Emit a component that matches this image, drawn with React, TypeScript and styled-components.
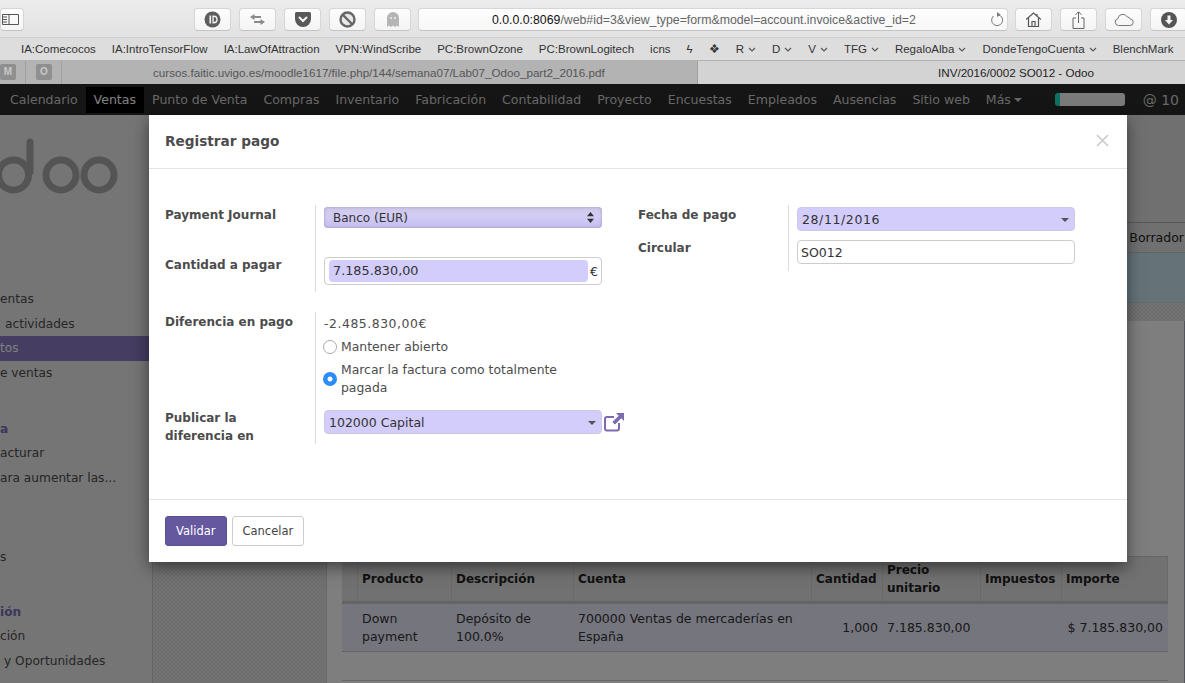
import styled, { createGlobalStyle } from 'styled-components';

const GlobalStyle = createGlobalStyle`
  html, body {
    margin: 0;
    padding: 0;
    background: #808080;
  }
  * {
    box-sizing: border-box;
  }
`;

const Window = styled.div`
  position: relative;
  width: 1185px;
  height: 683px;
  overflow: hidden;
  display: flex;
  flex-direction: column;
  font-family: 'Liberation Sans', Arial, sans-serif;
`;

/* browser chrome */
const Toolbar = styled.div`
  height: 38px;
  flex: none;
  display: flex;
  align-items: flex-start;
  padding-top: 8px;
  gap: 8px;
  background: linear-gradient(#ececec, #e2e2e2);
  border-bottom: 1px solid #cfcfcf;
`;

const ToolButton = styled.div<{ $clip?: boolean }>`
  width: ${(p) => (p.$clip ? '24px' : '37px')};
  height: 23px;
  flex: none;
  display: flex;
  align-items: center;
  justify-content: ${(p) => (p.$clip ? 'flex-end' : 'center')};
  padding-right: ${(p) => (p.$clip ? '4px' : '0')};
  margin-right: ${(p) => (p.$clip ? '162px' : '0')};
  background: linear-gradient(#fdfdfd, #f4f4f4);
  border: 1px solid #d6d6d6;
  border-bottom-color: #c4c4c4;
  border-radius: 4px;
`;

const UrlBar = styled.div`
  width: 590px;
  height: 23px;
  flex: none;
  margin: 0 -1px;
  display: flex;
  align-items: center;
  padding: 0 3px 0 73px;
  background: linear-gradient(#fefefe, #f7f7f7);
  border: 1px solid #d6d6d6;
  border-bottom-color: #c4c4c4;
  border-radius: 4px;
  font-size: 12.3px;
  color: #666;
  white-space: nowrap;
`;

const UrlHost = styled.span`
  color: #111;
`;

const UrlText = styled.div`
  flex: 1;
`;

const BookmarkBar = styled.div`
  height: 23px;
  flex: none;
  display: flex;
  align-items: center;
  padding-left: 21px;
  gap: 16px;
  background: #dddddd;
  border-bottom: 1px solid #b2b2b2;
  font-size: 11.5px;
  color: #333;
  white-space: nowrap;
`;

const Bookmark = styled.span`
  display: inline-flex;
  align-items: center;
  gap: 4px;
`;

const TabBar = styled.div`
  height: 23px;
  flex: none;
  display: flex;
  background: #b3b3b3;
  font-size: 11.65px;
  white-space: nowrap;
`;

const PinnedTab = styled.div<{ $w: number; $pad: number }>`
  width: ${(p) => p.$w}px;
  flex: none;
  padding: 3px 0 0 ${(p) => p.$pad}px;
  border-right: 1px solid #9f9f9f;
`;

const PinnedIcon = styled.div`
  width: 16px;
  height: 16px;
  border-radius: 2px;
  background: #8f8f8f;
  color: #c9c9c9;
  font-size: 10px;
  font-weight: bold;
  line-height: 16px;
  text-align: center;
`;

const PageTab = styled.div`
  width: 636px;
  flex: none;
  padding: 5px 0 0 91px;
  color: #555;
  border-right: 1px solid #9f9f9f;
`;

const ActiveTab = styled.div`
  flex: 1;
  padding: 5px 0 0 240px;
  background: #d3d3d3;
  color: #222;
`;

/* odoo page under the dialog */
const Page = styled.div`
  flex: 1;
  min-height: 0;
  display: flex;
  flex-direction: column;
  position: relative;
  font-family: 'DejaVu Sans', Verdana, sans-serif;
`;

const NavBar = styled.div`
  height: 31px;
  flex: none;
  display: flex;
  align-items: center;
  padding-left: 2px;
  background: #2a2a2a;
  color: #cfcfcf;
  font-size: 12.55px;
`;

const NavItem = styled.div<{ $active?: boolean }>`
  height: 26px;
  line-height: 26px;
  padding: 0 8px;
  white-space: nowrap;
  background: ${(p) => (p.$active ? '#000' : 'transparent')};
  color: ${(p) => (p.$active ? '#fff' : 'inherit')};
`;

const Caret = styled.span`
  display: inline-block;
  margin-left: 3px;
  vertical-align: 2px;
  border: 4px solid transparent;
  border-top-color: currentColor;
  border-bottom-width: 0;
`;

const NavRight = styled.div`
  margin-left: auto;
  display: flex;
  align-items: center;
  gap: 18px;
  padding-right: 6px;
  font-size: 14px;
`;

const UserPill = styled.div`
  width: 70px;
  height: 13px;
  border-radius: 3px;
  background: #f6f6f6;
  border-left: 5px solid #1ce0c0;
`;

const Main = styled.div`
  flex: 1;
  min-height: 0;
  display: flex;
`;

const Sidebar = styled.div`
  width: 153px;
  flex: none;
  padding-top: 23px;
  overflow: hidden;
  background: #ebebeb;
  border-right: 1px solid #c8c8c8;
  font-size: 12.2px;
  color: #4c4c4c;
  white-space: nowrap;
`;

const Logo = styled.svg`
  display: block;
  width: 120px;
  height: 56px;
  margin-bottom: 93px;
`;

const MenuSection = styled.div<{ $top?: number }>`
  margin-top: ${(p) => p.$top ?? 31}px;
`;

const MenuItem = styled.div<{ $active?: boolean; $title?: boolean; $indent?: number }>`
  height: 24.7px;
  line-height: 24px;
  padding-left: ${(p) => p.$indent ?? 0}px;
  background: ${(p) => (p.$active ? '#8a7ac4' : 'transparent')};
  color: ${(p) => (p.$active ? '#fff' : p.$title ? '#7c6bb5' : 'inherit')};
  font-weight: ${(p) => (p.$title ? 'bold' : 'normal')};
`;

const checker = `
  background-color: #e6e6e6;
  background-image: repeating-conic-gradient(#dcdcdc 0 25%, transparent 0 50%);
  background-size: 4px 4px;
`;

const Content = styled.div`
  flex: 1;
  min-width: 0;
  display: flex;
  flex-direction: column;
  background: #e0e0e0;
`;

const ControlPanel = styled.div`
  height: 107px;
  flex: none;
`;

const StatusBar = styled.div`
  height: 31px;
  flex: none;
  display: flex;
  justify-content: flex-end;
  align-items: center;
  border-top: 1px solid #b0b0b0;
  border-bottom: 1px solid #c4c4c4;
  font-size: 12.5px;
  color: #222;
  padding-right: 1px;
`;

const InfoBand = styled.div`
  height: 50px;
  flex: none;
  background: #cae7f3;
  border-bottom: 1px solid #bde0e8;
`;

const Sheetless = styled.div`
  height: 18px;
  flex: none;
  ${checker}
`;

const Lower = styled.div`
  flex: 1;
  min-height: 0;
  display: flex;
  ${checker}
`;

const Sheet = styled.div`
  margin-left: 173px;
  flex: 1;
  padding: 235px 16px 0 15px;
  background: #fcfcfc;
  border-left: 1px solid #d0d0d0;
  border-right: 1px solid #a8a8b8;
`;

const TableRow = styled.div<{ $head?: boolean }>`
  display: grid;
  grid-template-columns: 16px 94px 122px 238px 71px 98px 81px 106px;
  height: 48px;
  font-size: ${(p) => (p.$head ? '12px' : '12.5px')};
  line-height: 18px;
  color: ${(p) => (p.$head ? '#222' : '#333')};
  font-weight: ${(p) => (p.$head ? 'bold' : 'normal')};
  background: ${(p) => (p.$head ? '#e2e2e2' : '#eaeafa')};
  border-top: ${(p) => (p.$head ? '1px solid #cccccc' : '0')};
  border-bottom: ${(p) => (p.$head ? '3px solid #c8c8c8' : '1px solid #c8c8c8')};
`;

const TableCell = styled.div<{ $head?: boolean; $right?: boolean }>`
  display: flex;
  align-items: center;
  justify-content: ${(p) => (p.$right ? 'flex-end' : 'flex-start')};
  padding: 0 ${(p) => (p.$right ? '5px' : '4px')};
  border-right: ${(p) => (p.$head ? '1px solid #d2d2d2' : '0')};
`;

const TableFoot = styled.div`
  margin-top: 28px;
  border-top: 1px solid #cfcfcf;
`;

const Backdrop = styled.div`
  position: absolute;
  inset: 0;
  background: rgba(0, 0, 0, 0.5);
`;

/* dialog */
const Modal = styled.div`
  position: absolute;
  left: 149px;
  top: 31px;
  width: 978px;
  height: 447px;
  display: flex;
  flex-direction: column;
  background: #fff;
  box-shadow: 0 5px 15px rgba(0, 0, 0, 0.5);
  color: #4c4c4c;
  font-size: 12.4px;
`;

const ModalHeader = styled.div`
  height: 54px;
  flex: none;
  display: flex;
  align-items: center;
  justify-content: space-between;
  padding: 0 18px 2px 16px;
  border-bottom: 1px solid #e5e5e5;
`;

const ModalTitle = styled.div`
  font-size: 13.65px;
  font-weight: bold;
`;

const ModalBody = styled.div`
  flex: 1;
  display: grid;
  grid-template-columns: 473px 1fr;
  align-content: start;
  padding: 36px 16px 0;
`;

const FormColumn = styled.div`
  display: flex;
  flex-direction: column;
  gap: 20px;
`;

const FieldGroup = styled.div`
  display: grid;
  grid-template-columns: 150px auto;
  justify-content: start;
`;

const FieldLabel = styled.div`
  font-size: 12px;
  font-weight: bold;
  line-height: 18px;
  width: 135px;
  padding-top: 1px;
`;

const FieldValue = styled.div<{ $h: number; $top?: number }>`
  height: ${(p) => p.$h}px;
  padding: ${(p) => p.$top ?? 2}px 0 0 8px;
  border-left: 1px solid #ddd;
  display: flex;
  flex-direction: column;
  align-items: flex-start;
`;

const fieldBase = `
  width: 278px;
  display: flex;
  align-items: center;
  justify-content: space-between;
  color: #333;
  font-size: 12.5px;
  border-radius: 4px;
`;

const NativeSelect = styled.div`
  ${fieldBase}
  height: 21px;
  padding: 0 8px 0 9px;
  font-size: 12px;
  background: linear-gradient(#cdc7e6, #d3cdf6 40%, #c3bdee);
  box-shadow: inset 0 0 3px #9a94c0;
`;

const DropField = styled.div<{ $wide?: boolean }>`
  ${fieldBase}
  height: 24px;
  padding: 0 5px 0 4px;
  letter-spacing: ${(p) => (p.$wide ? '0.6px' : '0')};
  background: #d3cdfc;
  border: 1px solid #ccc9e4;
`;

const TextField = styled.div`
  ${fieldBase}
  height: 24px;
  padding: 0 3px;
  background: #fff;
  border: 1px solid #ccc;
`;

const MoneyField = styled.div`
  ${fieldBase}
  height: 28px;
  padding: 2px 3px 2px 4px;
  gap: 2px;
  background: #fff;
  border: 1px solid #ccc;
`;

const MoneyInput = styled.div`
  flex: 1;
  height: 22px;
  line-height: 22px;
  padding-left: 4px;
  font-size: 12.8px;
  background: #d3cdfc;
  border-radius: 4px;
`;

const DropCaret = styled.span`
  border: 4px solid transparent;
  border-top-color: #555;
  border-bottom-width: 0;
  transform: translateY(1px);
`;

const AmountLine = styled.div`
  line-height: 18px;
  letter-spacing: 0.55px;
`;

const RadioRow = styled.label`
  display: flex;
  align-items: center;
  gap: 4px;
  margin-top: 4.5px;
  margin-left: -1px;
  width: 255px;
  line-height: 18.5px;
`;

const Radio = styled.input`
  appearance: none;
  width: 14px;
  height: 14px;
  flex: none;
  margin: 0;
  background: #fff;
  border: 1px solid #aaa;
  border-radius: 50%;

  &:checked {
    border: 0;
    background: radial-gradient(circle, #fff 0 2.2px, #2c8cfb 2.8px);
  }
`;

const SelectLine = styled.div`
  display: flex;
  align-items: center;
  gap: 2px;
`;

const ModalFooter = styled.div`
  height: 63px;
  flex: none;
  display: flex;
  align-items: flex-start;
  gap: 5px;
  padding: 16px 16px 0;
  border-top: 1px solid #e5e5e5;
`;

const DialogButton = styled.div<{ $primary?: boolean }>`
  height: 30px;
  padding: 0 10px;
  line-height: 29px;
  font-size: 11.5px;
  border-radius: 3px;
  border: 1px solid ${(p) => (p.$primary ? '#5d5095' : '#ccc')};
  background: ${(p) => (p.$primary ? '#65589f' : '#fff')};
  color: ${(p) => (p.$primary ? '#fff' : '#444')};
`;

const Chevron = () => (
  <svg width="8" height="5" viewBox="0 0 8 5">
    <path d="M1 1l3 3 3-3" fill="none" stroke="#555" strokeWidth="1.1" />
  </svg>
);

const SidebarToggleIcon = () => (
  <svg width="17" height="11" viewBox="0 0 17 11">
    <path d="M.5.5h16v10H.5zM7 .5v10M1 3h4M1 5.5h4M1 8h4" fill="none" stroke="#555" />
  </svg>
);

const toolIcons = {
  id: (
    <svg width="17" height="17" viewBox="0 0 17 17">
      <circle cx="8.5" cy="8.5" r="8" fill="#5e5e5e" />
      <path d="M5.5 4.5h1.6v8H5.5zM8.4 4.5h1.3a4 4 0 010 8H8.4zm1.3 1.6v4.8h.3a2.4 2.4 0 000-4.8z" fill="#f4f4f4" />
    </svg>
  ),
  swap: (
    <svg width="15" height="11" viewBox="0 0 15 11">
      <path d="M4.5 0v2H11v2H4.5v2L0 3zM10.5 5v2H4v2h6.500v2L15 8z" fill="#8a8a8a" />
    </svg>
  ),
  pocket: (
    <svg width="16" height="15" viewBox="0 0 16 15">
      <path d="M1.500 0h13A1.500 1.500 0 0116 1.500V7A8 8 0 010 7V1.500A1.500 1.500 0 011.500 0z" fill="#585858" />
      <path d="M4.500 5.500L8 9l3.500-3.500" fill="none" stroke="#f4f4f4" strokeWidth="2" strokeLinecap="round" />
    </svg>
  ),
  block: (
    <svg width="17" height="17" viewBox="0 0 17 17">
      <circle cx="8.500" cy="8.500" r="7" fill="#e8e8e8" stroke="#666" strokeWidth="2.400" />
      <path d="M4 4l9 9" stroke="#666" strokeWidth="2.400" />
    </svg>
  ),
  ghost: (
    <svg width="12" height="15" viewBox="0 0 12 15">
      <path d="M0 15V6a6 6 0 0112 0v9l-2-1.500L8 15l-2-1.500L4 15l-2-1.500z" fill="#b5b5b5" />
      <circle cx="4" cy="6" r="1" fill="#efefef" />
      <circle cx="8" cy="6" r="1" fill="#efefef" />
    </svg>
  ),
  reload: (
    <svg width="14" height="15" viewBox="0 0 14 15">
      <path d="M8.500 2.800a5.500 5.500 0 11-5 1.200" fill="none" stroke="#777" strokeWidth="1" />
      <path d="M7 0l3.500 2.800L7 5z" fill="#777" />
    </svg>
  ),
  home: (
    <svg width="15" height="15" viewBox="0 0 15 15">
      <path d="M0 7.500L7.500 1 15 7.500M2.500 6v8.500h10V6M6 14.500V9.500h3v5M11 2v2.500" fill="none" stroke="#555" strokeWidth="1.200" />
    </svg>
  ),
  share: (
    <svg width="13" height="18" viewBox="0 0 13 18">
      <path d="M4 7H1v10.500h11V7H9M6.500 12V1M3.500 3.800l3-3 3 3" fill="none" stroke="#666" />
    </svg>
  ),
  cloud: (
    <svg width="20" height="13" viewBox="0 0 20 13">
      <path d="M4.500 12.500a3.500 3.500 0 01-.6-6.900A5 5 0 0113.300 4a3 3 0 013 2.100 3.200 3.200 0 01-.6 6.400z" fill="none" stroke="#777" />
    </svg>
  ),
  download: (
    <svg width="16" height="16" viewBox="0 0 16 16">
      <circle cx="8" cy="8" r="8" fill="#555" />
      <path d="M6.500 3.500h3V8H12l-4 4.500L4 8h2.500z" fill="#f4f4f4" />
    </svg>
  ),
};

const columns = ['', 'Producto', 'Descripción', 'Cuenta', 'Cantidad', 'Precio unitario', 'Impuestos', 'Importe'];

const navItems = ['Calendario', 'Ventas', 'Punto de Venta', 'Compras', 'Inventario', 'Fabricación', 'Contabilidad', 'Proyecto', 'Encuestas', 'Empleados', 'Ausencias', 'Sitio web'];

const bookmarks = ['IA:Comecocos', 'IA:IntroTensorFlow', 'IA:LawOfAttraction', 'VPN:WindScribe', 'PC:BrownOzone', 'PC:BrownLogitech', 'icns'];

export default function App() {
  return (
    <Window>
      <GlobalStyle />
      <Toolbar>
        <ToolButton $clip>
          <SidebarToggleIcon />
        </ToolButton>
        <ToolButton>{toolIcons.id}</ToolButton>
        <ToolButton>{toolIcons.swap}</ToolButton>
        <ToolButton>{toolIcons.pocket}</ToolButton>
        <ToolButton>{toolIcons.block}</ToolButton>
        <ToolButton>{toolIcons.ghost}</ToolButton>
        <UrlBar>
          <UrlText>
            <UrlHost>0.0.0.0:8069</UrlHost>/web#id=3&amp;view_type=form&amp;model=account.invoice&amp;active_id=2
          </UrlText>
          {toolIcons.reload}
        </UrlBar>
        <ToolButton>{toolIcons.home}</ToolButton>
        <ToolButton>{toolIcons.share}</ToolButton>
        <ToolButton>{toolIcons.cloud}</ToolButton>
        <ToolButton>{toolIcons.download}</ToolButton>
      </Toolbar>

      <BookmarkBar>
        {bookmarks.map((b) => (
          <Bookmark key={b}>{b}</Bookmark>
        ))}
        <Bookmark>ϟ</Bookmark>
        <Bookmark>❖</Bookmark>
        {['R', 'D', 'V', 'TFG', 'RegaloAlba', 'DondeTengoCuenta'].map((b) => (
          <Bookmark key={b}>
            {b} <Chevron />
          </Bookmark>
        ))}
        <Bookmark>BlenchMark</Bookmark>
      </BookmarkBar>

      <TabBar>
        <PinnedTab $w={26} $pad={0}>
          <PinnedIcon>M</PinnedIcon>
        </PinnedTab>
        <PinnedTab $w={36} $pad={10}>
          <PinnedIcon>O</PinnedIcon>
        </PinnedTab>
        <PageTab>cursos.faitic.uvigo.es/moodle1617/file.php/144/semana07/Lab07_Odoo_part2_2016.pdf</PageTab>
        <ActiveTab>INV/2016/0002 SO012 - Odoo</ActiveTab>
      </TabBar>

      <Page>
        <NavBar>
          {navItems.map((n) => (
            <NavItem key={n} $active={n === 'Ventas'}>
              {n}
            </NavItem>
          ))}
          <NavItem>
            Más
            <Caret />
          </NavItem>
          <NavRight>
            <UserPill />
            <span>@ 10</span>
          </NavRight>
        </NavBar>

        <Main>
          <Sidebar>
            <Logo viewBox="0 0 120 56">
              <g fill="none" stroke="#a8a8a8" strokeWidth="7">
                <circle cx="13.500" cy="37" r="15" />
                <path d="M30 4v30" strokeLinecap="round" />
                <circle cx="61" cy="37" r="15" />
                <circle cx="99" cy="37" r="15" />
              </g>
            </Logo>
            <MenuSection $top={0}>
              <MenuItem>entas</MenuItem>
              <MenuItem $indent={5}>actividades</MenuItem>
              <MenuItem $active>tos</MenuItem>
              <MenuItem>e ventas</MenuItem>
            </MenuSection>
            <MenuSection>
              <MenuItem $title>a</MenuItem>
              <MenuItem>acturar</MenuItem>
              <MenuItem>ara aumentar las...</MenuItem>
            </MenuSection>
            <MenuSection $top={54}>
              <MenuItem>s</MenuItem>
            </MenuSection>
            <MenuSection $top={30}>
              <MenuItem $title>ión</MenuItem>
              <MenuItem>ción</MenuItem>
              <MenuItem $indent={4}>y Oportunidades</MenuItem>
            </MenuSection>
          </Sidebar>

          <Content>
            <ControlPanel />
            <StatusBar>Borrador</StatusBar>
            <InfoBand />
            <Sheetless />
            <Lower>
              <Sheet>
                <TableRow $head>
                  {columns.map((c) => (
                    <TableCell key={c} $head>
                      {c}
                    </TableCell>
                  ))}
                </TableRow>
                <TableRow>
                  <TableCell />
                  <TableCell>Down payment</TableCell>
                  <TableCell>Depósito de 100.0%</TableCell>
                  <TableCell>700000 Ventas de mercaderías en España</TableCell>
                  <TableCell $right>1,000</TableCell>
                  <TableCell>7.185.830,00</TableCell>
                  <TableCell />
                  <TableCell $right>$ 7.185.830,00</TableCell>
                </TableRow>
                <TableFoot />
              </Sheet>
            </Lower>
          </Content>
        </Main>

        <Backdrop />

        <Modal>
          <ModalHeader>
            <ModalTitle>Registrar pago</ModalTitle>
            <svg width="13" height="13" viewBox="0 0 13 13">
              <path d="M1 1l11 11M12 1L1 12" stroke="#c9c9c9" strokeWidth="1.500" />
            </svg>
          </ModalHeader>

          <ModalBody>
            <FormColumn>
              <FieldGroup>
                <FieldLabel>Payment Journal</FieldLabel>
                <FieldValue $h={50}>
                  <NativeSelect>
                    Banco (EUR)
                    <svg width="7" height="11" viewBox="0 0 7 11">
                      <path d="M3.500 0L7 4.300H0zM3.500 11L0 6.700h7z" fill="#333" />
                    </svg>
                  </NativeSelect>
                </FieldValue>
                <FieldLabel>Cantidad a pagar</FieldLabel>
                <FieldValue $h={37}>
                  <MoneyField>
                    <MoneyInput>7.185.830,00</MoneyInput>€
                  </MoneyField>
                </FieldValue>
              </FieldGroup>

              <FieldGroup>
                <FieldLabel>Diferencia en pago</FieldLabel>
                <FieldValue $h={96} $top={3}>
                  <AmountLine>-2.485.830,00€</AmountLine>
                  <RadioRow>
                    <Radio type="radio" name="diff" readOnly />
                    Mantener abierto
                  </RadioRow>
                  <RadioRow>
                    <Radio type="radio" name="diff" defaultChecked />
                    Marcar la factura como totalmente pagada
                  </RadioRow>
                </FieldValue>
                <FieldLabel>Publicar la diferencia en</FieldLabel>
                <FieldValue $h={36}>
                  <SelectLine>
                    <DropField>
                      102000 Capital
                      <DropCaret />
                    </DropField>
                    <svg width="20" height="19" viewBox="0 0 20 19">
                      <path d="M15 10v5.500a2 2 0 01-2 2H3a2 2 0 01-2-2V6a2 2 0 012-2h7" fill="none" stroke="#7c6bb0" strokeWidth="2" />
                      <path d="M12 0h8v8l-2.700-2.700-6.300 6.300-2.600-2.600 6.300-6.300z" fill="#7c6bb0" />
                    </svg>
                  </SelectLine>
                </FieldValue>
              </FieldGroup>
            </FormColumn>

            <FormColumn>
              <FieldGroup>
                <FieldLabel>Fecha de pago</FieldLabel>
                <FieldValue $h={33}>
                  <DropField $wide>
                    28/11/2016
                    <DropCaret />
                  </DropField>
                </FieldValue>
                <FieldLabel>Circular</FieldLabel>
                <FieldValue $h={33}>
                  <TextField>SO012</TextField>
                </FieldValue>
              </FieldGroup>
            </FormColumn>
          </ModalBody>

          <ModalFooter>
            <DialogButton $primary>Validar</DialogButton>
            <DialogButton>Cancelar</DialogButton>
          </ModalFooter>
        </Modal>
      </Page>
    </Window>
  );
}
